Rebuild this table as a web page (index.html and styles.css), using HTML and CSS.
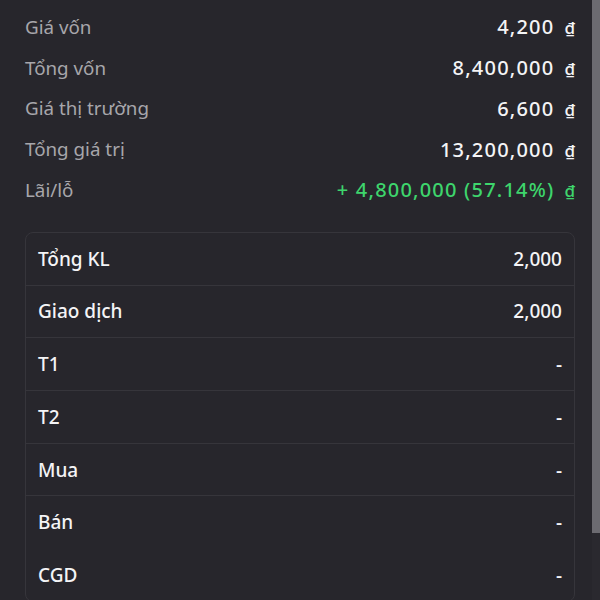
FILE: index.html
```html
<!DOCTYPE html>
<html lang="vi">
<head>
<meta charset="utf-8">
<link rel="stylesheet" href="styles.css">
</head>
<body>
<div class="page">
  <div class="summary">
    <div class="srow"><span class="slabel">Giá vốn</span><span class="sval">4,200<span class="cur">₫</span></span></div>
    <div class="srow"><span class="slabel">Tổng vốn</span><span class="sval">8,400,000<span class="cur">₫</span></span></div>
    <div class="srow"><span class="slabel">Giá thị trường</span><span class="sval">6,600<span class="cur">₫</span></span></div>
    <div class="srow"><span class="slabel">Tổng giá trị</span><span class="sval">13,200,000<span class="cur">₫</span></span></div>
    <div class="srow"><span class="slabel">Lãi/lỗ</span><span class="sval up">+ 4,800,000 (57.14%)<span class="cur">₫</span></span></div>
  </div>
  <div class="card">
    <div class="crow"><span>Tổng KL</span><span>2,000</span></div>
    <div class="crow"><span>Giao dịch</span><span>2,000</span></div>
    <div class="crow"><span>T1</span><span>-</span></div>
    <div class="crow"><span>T2</span><span>-</span></div>
    <div class="crow"><span>Mua</span><span>-</span></div>
    <div class="crow noline"><span>Bán</span><span>-</span></div>
    <div class="crow"><span>CGD</span><span>-</span></div>
  </div>
</div>
<div class="scrollbar"><div class="thumb"></div></div>
</body>
</html>
```
FILE: styles.css
```css
html, body {
  margin: 0;
  padding: 0;
  background: #27262c;
  overflow: hidden;
}
body {
  font-family: "Noto Sans", "Open Sans", sans-serif;
  font-size: 19px;
  color: #f2f2f4;
}
.page {
  padding: 6.6px 25px 75px 25px;
}
.summary {
  display: flex;
  flex-direction: column;
}
.srow {
  height: 40.75px;
  display: flex;
  align-items: center;
  justify-content: space-between;
}
.slabel {
  color: #a7a6ab;
  font-size: 18.8px;
}
.sval {
  font-size: 20px;
  font-weight: 500;
  letter-spacing: 1.2px;
  color: #f4f4f6;
}
.sval.up {
  color: #3ed56c;
}
.cur {
  font-weight: 500;
  font-size: 17px;
  letter-spacing: 0;
  margin-left: 10px;
}
.card {
  margin-top: 21.6px;
  border: 1px solid #36353b;
  border-radius: 8px;
  background: #27262c;
}
.crow {
  height: 51.7px;
  padding: 0 12px;
  display: flex;
  align-items: center;
  justify-content: space-between;
  border-bottom: 1px solid #36353b;
  font-weight: 500;
  color: #f4f4f6;
}
.crow.noline {
  border-bottom-color: transparent;
}
.crow:last-child {
  border-bottom: none;
}
.scrollbar {
  position: fixed;
  top: 0;
  right: 0;
  width: 8px;
  height: 100%;
  background: #2a292f;
}
.thumb {
  height: 533px;
  background: #6c6b71;
}
```
